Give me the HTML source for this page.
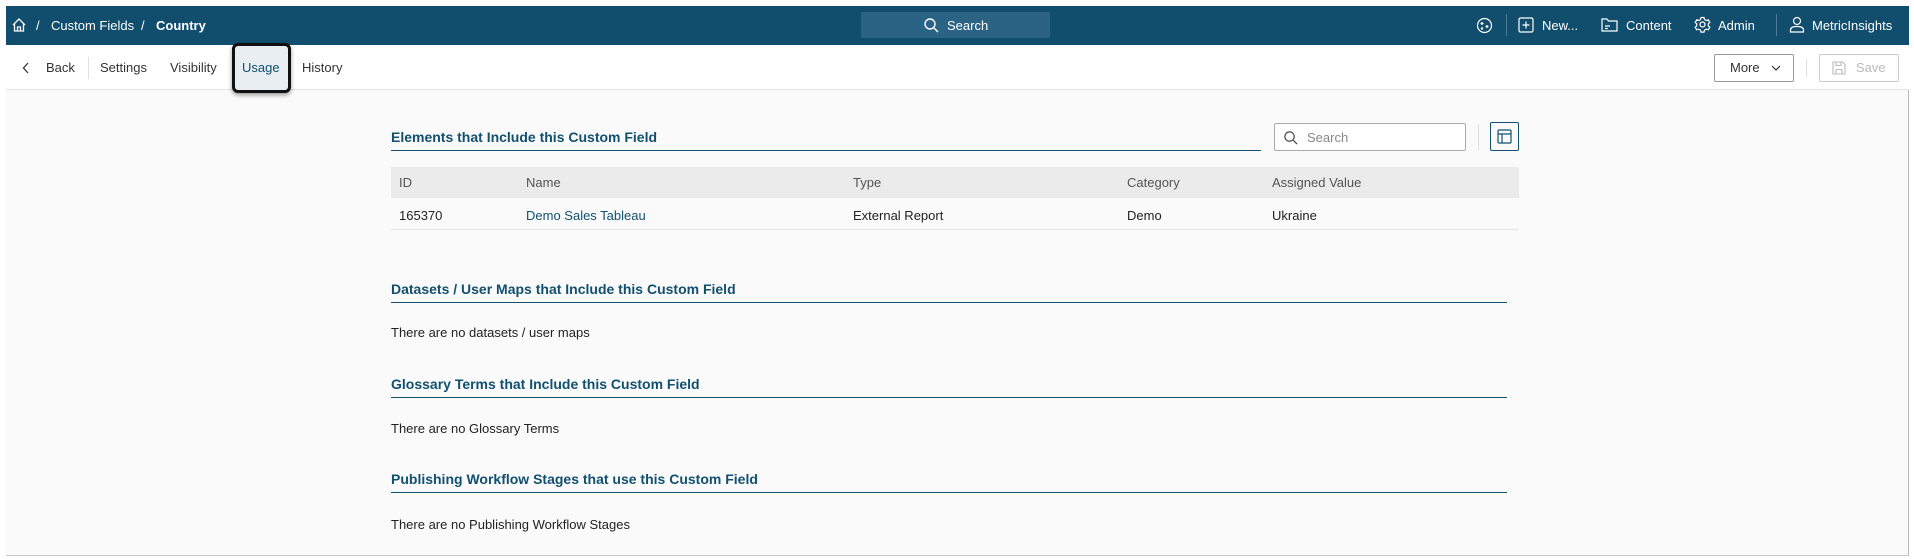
<!DOCTYPE html>
<html><head><meta charset="utf-8"><style>
*{box-sizing:border-box;margin:0;padding:0}
body{width:1914px;height:559px;background:#fff;font-family:"Liberation Sans",sans-serif;position:relative;overflow:hidden}
.frame{position:absolute;left:6px;top:6px;width:1903px;height:550px;border-right:1px solid #b8b8b8;border-bottom:1px solid #c8c8c8;background:#fafafa}
.top{position:absolute;left:6px;top:6px;width:1903px;height:39px;background:#114d6d;color:#fff;font-size:13px}
.top span{position:absolute;top:12px;white-space:nowrap}
.sub{position:absolute;left:6px;top:45px;width:1903px;height:45px;background:#fff;border-bottom:1px solid #e4e4e4;font-size:13px;color:#333}
.sub span{position:absolute;top:15px}
.abs{position:absolute}
h3{position:absolute;left:391px;font-size:14px;color:#12506f;font-weight:bold}
.line{position:absolute;left:391px;height:1px;background:#12506f}
.t{position:absolute;font-size:13px;color:#222;white-space:nowrap}
</style></head><body>
<div class="frame"></div>
<div class="top">
<svg class="abs" style="left:5px;top:11px" width="16" height="16" viewBox="0 0 16 16" fill="none" stroke="#fff" stroke-width="1.3"><path d="M2 8L8 2l6 6M3.5 6.5V14h9V6.5M6.5 14v-4h3v4"/></svg>
<span style="left:30px">/</span><span style="left:45px">Custom Fields</span><span style="left:135px">/</span><span style="left:150px;font-weight:bold">Country</span>
<div class="abs" style="left:855px;top:6px;width:189px;height:26px;background:#2a6383;border-radius:2px"></div>
<svg class="abs" style="left:917px;top:11px" width="16" height="16" viewBox="0 0 16 16" fill="none" stroke="#fff" stroke-width="1.4"><circle cx="7" cy="7" r="5"/><path d="M11 11l4 4"/></svg>
<span style="left:941px">Search</span>
<svg class="abs" style="left:1470px;top:11px" width="17" height="17" viewBox="0 0 17 17" fill="none" stroke="#fff" stroke-width="1.2"><circle cx="8.5" cy="8.5" r="7"/><path d="M6 5v3M4.5 6.5h3M11 8v3M9.5 9.5h3"/><circle cx="6" cy="11.5" r=".6"/></svg>
<div class="abs" style="left:1500px;top:8px;width:1px;height:22px;background:#4d7b94"></div>
<svg class="abs" style="left:1512px;top:11px" width="16" height="16" viewBox="0 0 16 16" fill="none" stroke="#fff" stroke-width="1.2"><rect x="1" y="1" width="14" height="14" rx="1.5"/><path d="M8 4.5v7M4.5 8h7"/></svg>
<span style="left:1536px">New...</span>
<svg class="abs" style="left:1595px;top:11px" width="17" height="16" viewBox="0 0 17 16" fill="none" stroke="#fff" stroke-width="1.2"><path d="M1 2h5l1.5 2H16v10H1zM4 9h5M4 11.5h3"/></svg>
<span style="left:1620px">Content</span>
<svg class="abs" style="left:1688px;top:10px" width="17" height="17" viewBox="0 0 17 17" fill="none" stroke="#fff" stroke-width="1.2"><circle cx="8.5" cy="8.5" r="2.5"/><path d="M7 1.5h3l.5 2 1.8 1 2-.7 1.5 2.6-1.5 1.4v2l1.5 1.4-1.5 2.6-2-.7-1.8 1-.5 2H7l-.5-2-1.8-1-2 .7-1.5-2.6 1.5-1.4v-2L1.2 6.4l1.5-2.6 2 .7 1.8-1z"/></svg>
<span style="left:1712px">Admin</span>
<div class="abs" style="left:1770px;top:8px;width:1px;height:22px;background:#4d7b94"></div>
<svg class="abs" style="left:1783px;top:10px" width="16" height="17" viewBox="0 0 16 17" fill="none" stroke="#fff" stroke-width="1.2"><circle cx="8" cy="5" r="3.5"/><path d="M1.5 16v-2c0-2 2-3.5 6.5-3.5s6.5 1.5 6.5 3.5v2z"/></svg>
<span style="left:1806px">MetricInsights</span>
</div>
<div class="sub">
<svg class="abs" style="left:16px;top:17px" width="8" height="12" viewBox="0 0 8 12" fill="none" stroke="#333" stroke-width="1.3"><path d="M6 1L1.5 6 6 11"/></svg>
<span style="left:40px">Back</span>
<div class="abs" style="left:82px;top:12px;width:1px;height:22px;background:#e0e0e0"></div>
<span style="left:94px">Settings</span><span style="left:164px">Visibility</span>
<div class="abs" style="left:226px;top:-2px;width:59px;height:50px;background:#e8eef2;border:3px solid #111;border-radius:6px;box-shadow:0 2px 4px rgba(0,0,0,.4)"></div>
<span style="left:236px;color:#12506f">Usage</span>
<span style="left:296px">History</span>
<div class="abs" style="left:1708px;top:9px;width:80px;height:28px;border:1px solid #999;border-radius:2px;background:#fff"></div>
<span style="left:1724px">More</span>
<svg class="abs" style="left:1765px;top:20px" width="10" height="6" viewBox="0 0 10 6" fill="none" stroke="#333" stroke-width="1.2"><path d="M1 1l4 4 4-4"/></svg>
<div class="abs" style="left:1800px;top:14px;width:1px;height:18px;background:#e0e0e0"></div>
<div class="abs" style="left:1813px;top:9px;width:80px;height:28px;border:1px solid #ccc;border-radius:2px;background:#fff"></div>
<svg class="abs" style="left:1826px;top:16px" width="14" height="14" viewBox="0 0 14 14" fill="none" stroke="#bbb" stroke-width="1.1"><path d="M1 1h9.5L13 3.5V13H1zM4 1v3.5h5V1M4 13V8.5h6V13"/></svg>
<span style="left:1850px;color:#bbb">Save</span>
</div>

<h3 style="top:129px">Elements that Include this Custom Field</h3>
<div class="line" style="top:150px;width:870px"></div>
<div class="abs" style="left:1274px;top:123px;width:192px;height:28px;border:1px solid #aaa;border-radius:2px;background:#fff"></div>
<svg class="abs" style="left:1283px;top:130px" width="15" height="15" viewBox="0 0 16 16" fill="none" stroke="#444" stroke-width="1.3"><circle cx="7" cy="7" r="5"/><path d="M11 11l4 4"/></svg>
<span class="t" style="left:1307px;top:130px;color:#888">Search</span>
<div class="abs" style="left:1478px;top:124px;width:1px;height:26px;background:#e0e0e0"></div>
<div class="abs" style="left:1490px;top:122px;width:29px;height:29px;border:1px solid #12506f;border-radius:2px"></div>
<svg class="abs" style="left:1497px;top:129px" width="15" height="15" viewBox="0 0 15 15" fill="none" stroke="#12506f" stroke-width="1.2"><rect x="1" y="1" width="13" height="13" rx="1"/><path d="M1 5h13M5 5v9"/></svg>
<div class="abs" style="left:391px;top:167px;width:1128px;height:31px;background:#ebebeb"></div>
<span class="t" style="left:399px;top:175px;color:#555">ID</span>
<span class="t" style="left:526px;top:175px;color:#555">Name</span>
<span class="t" style="left:853px;top:175px;color:#555">Type</span>
<span class="t" style="left:1127px;top:175px;color:#555">Category</span>
<span class="t" style="left:1272px;top:175px;color:#555">Assigned Value</span>
<span class="t" style="left:399px;top:208px">165370</span>
<span class="t" style="left:526px;top:208px;color:#12506f">Demo Sales Tableau</span>
<span class="t" style="left:853px;top:208px">External Report</span>
<span class="t" style="left:1127px;top:208px">Demo</span>
<span class="t" style="left:1272px;top:208px">Ukraine</span>
<div class="abs" style="left:391px;top:229px;width:1128px;height:1px;background:#e4e4e4"></div>

<h3 style="top:281px">Datasets / User Maps that Include this Custom Field</h3>
<div class="line" style="top:302px;width:1116px"></div>
<span class="t" style="left:391px;top:325px">There are no datasets / user maps</span>
<h3 style="top:376px">Glossary Terms that Include this Custom Field</h3>
<div class="line" style="top:397px;width:1116px"></div>
<span class="t" style="left:391px;top:421px">There are no Glossary Terms</span>
<h3 style="top:471px">Publishing Workflow Stages that use this Custom Field</h3>
<div class="line" style="top:492px;width:1116px"></div>
<span class="t" style="left:391px;top:517px">There are no Publishing Workflow Stages</span>
</body></html>
